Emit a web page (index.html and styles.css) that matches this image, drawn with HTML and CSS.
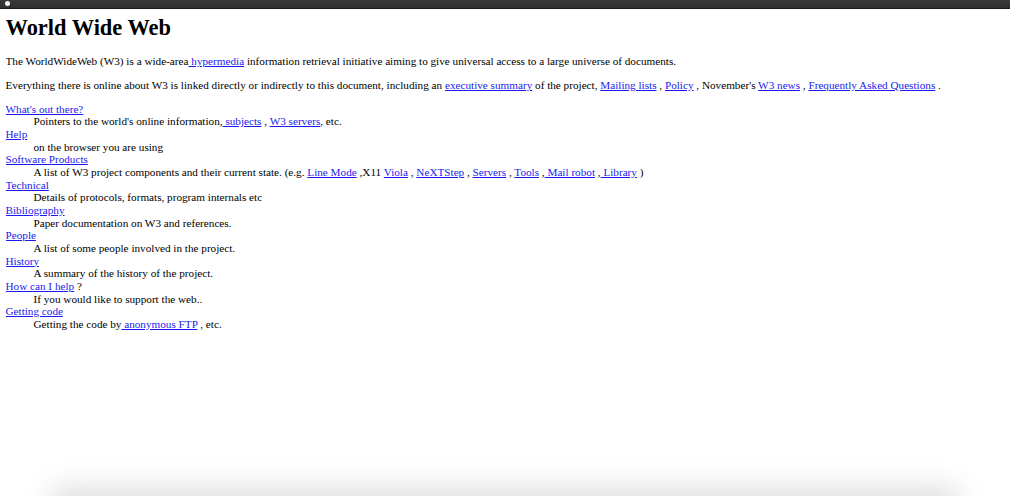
FILE: index.html
```html
<!DOCTYPE html>
<html>
<head>
<meta charset="utf-8">
<title>The World Wide Web project</title>
<link rel="stylesheet" href="styles.css">
</head>
<body class="page">
<div class="topbar"><span class="dot"></span></div>
<h1 class="title">World Wide Web</h1>
<p class="para">The WorldWideWeb (W3) is a wide-area<a class="lnk" href="#">
hypermedia</a> information retrieval
initiative aiming to give universal
access to a large universe of documents.</p>
<p class="para">Everything there is online about
W3 is linked directly or indirectly
to this document, including an <a class="lnk" href="#">executive
summary</a> of the project, <a class="lnk" href="#">Mailing lists</a>
, <a class="lnk" href="#">Policy</a> , November's  <a class="lnk" href="#">W3  news</a> ,
<a class="lnk" href="#">Frequently Asked Questions</a> .</p>
<dl class="list">
<dt><a class="lnk" href="#">What's out there?</a></dt>
<dd class="desc"> Pointers to the
world's online information,<a class="lnk" href="#"> subjects</a>
, <a class="lnk" href="#">W3 servers</a>, etc.</dd>
<dt><a class="lnk" href="#">Help</a></dt>
<dd class="desc"> on the browser you are using</dd>
<dt><a class="lnk" href="#">Software Products</a></dt>
<dd class="desc"> A list of W3 project
components and their current
state.
(e.g. <a class="lnk" href="#">Line Mode</a> ,X11 <a class="lnk" href="#">Viola</a> ,  <a class="lnk" href="#">NeXTStep</a>
, <a class="lnk" href="#">Servers</a> , <a class="lnk" href="#">Tools</a>
,<a class="lnk" href="#"> Mail robot</a>
,<a class="lnk" href="#">
Library</a> )</dd>
<dt><a class="lnk" href="#">Technical</a></dt>
<dd class="desc"> Details of protocols, formats,
program internals etc</dd>
<dt><a class="lnk" href="#">Bibliography</a></dt>
<dd class="desc"> Paper documentation
on  W3 and references.</dd>
<dt><a class="lnk" href="#">People</a></dt>
<dd class="desc"> A list of some people involved
in the project.</dd>
<dt><a class="lnk" href="#">History</a></dt>
<dd class="desc"> A summary of the history
of the project.</dd>
<dt><a class="lnk" href="#">How can I help</a> ?</dt>
<dd class="desc"> If you would like
to support the web..</dd>
<dt><a class="lnk" href="#">Getting code</a></dt>
<dd class="desc"> Getting the code by<a class="lnk" href="#">
anonymous FTP</a> , etc.</dd>
</dl>
<div class="shadow"></div>
</body>
</html>
```

FILE: styles.css
```css
html {
  background: #ffffff;
}
.page {
  margin: 5.5px;
  font-family: "Liberation Serif", "Times New Roman", serif;
  font-size: 11.2px;
  line-height: 12.65px;
  color: #000000;
  background: #ffffff;
}
.topbar {
  position: fixed;
  top: 0;
  left: 0;
  right: 0;
  height: 8px;
  background: linear-gradient(#3a3a3a, #2e2e2e);
  border-bottom: 1px solid #1c1c1c;
  z-index: 10;
}
.dot {
  position: absolute;
  left: 5px;
  top: 1px;
  width: 5px;
  height: 5px;
  border-radius: 50%;
  background: #f2f2f2;
}
.title {
  font-size: 22.4px;
  line-height: 26px;
  font-weight: bold;
  margin: 9px 0 14.5px;
}
.para {
  margin: 11.2px 0;
}
.list {
  margin: 11.2px 0;
}
.desc {
  margin-left: 28px;
}
.lnk {
  color: #1a1aee;
  text-decoration: underline;
}
.shadow {
  position: fixed;
  left: 60px;
  right: 60px;
  bottom: -24px;
  height: 24px;
  box-shadow: 0 0 30px 8px rgba(0, 0, 0, 0.14);
  background: #e4e4e4;
}
```
